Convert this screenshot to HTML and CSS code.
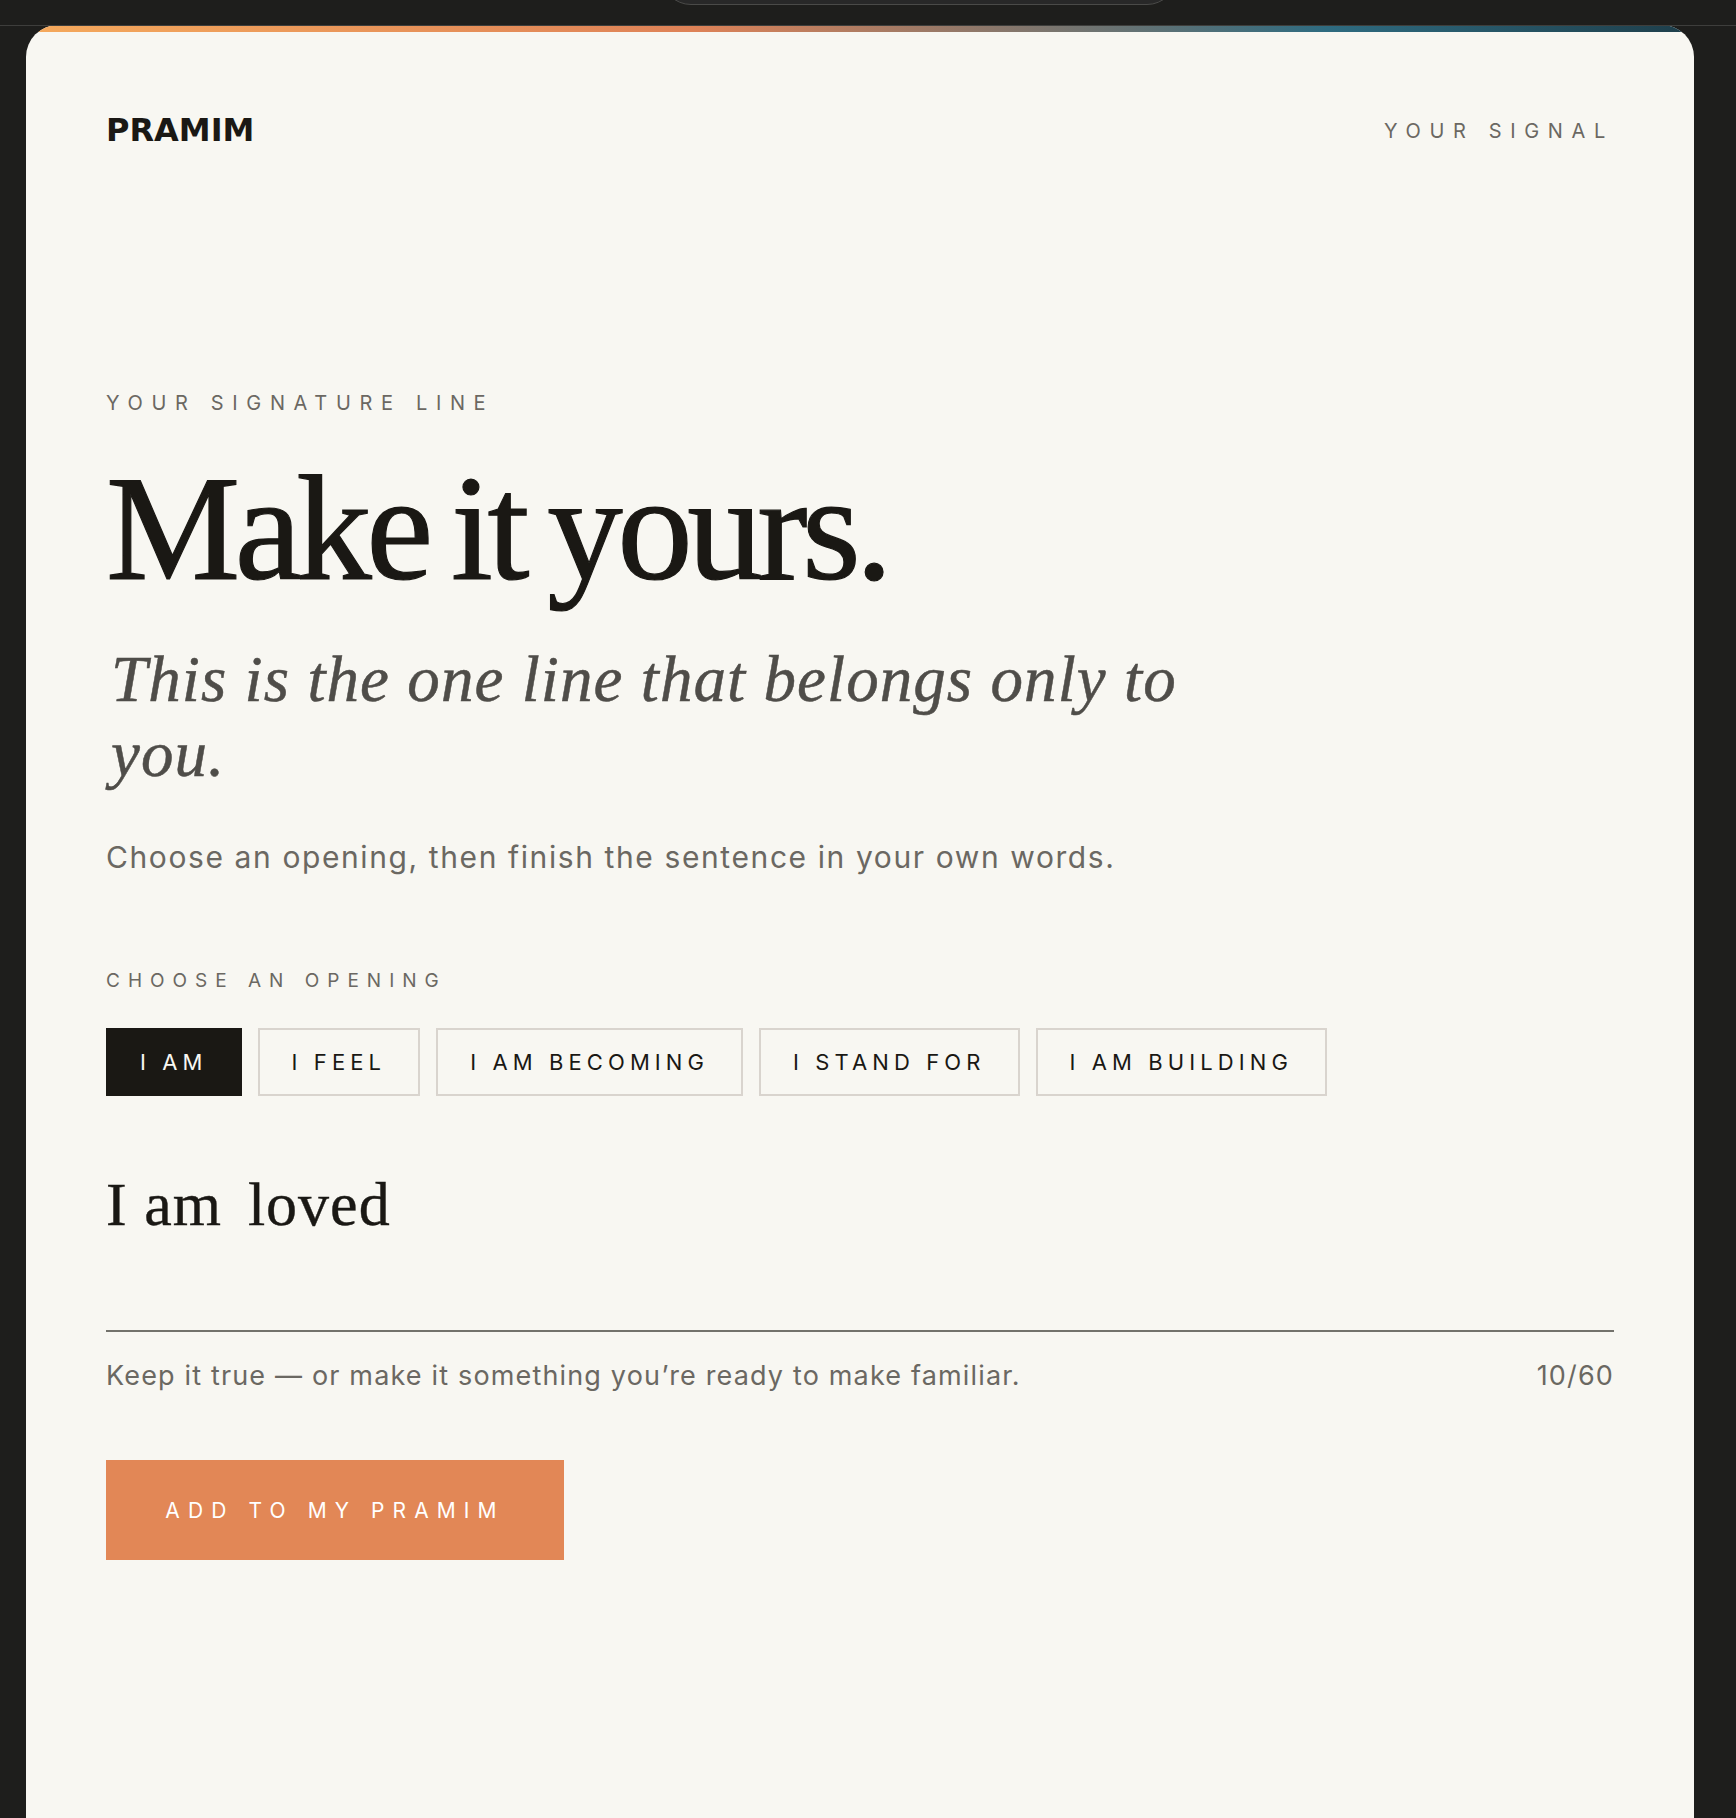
FILE: index.html
```html
<!DOCTYPE html>
<html lang="en">
<head>
    <meta charset="UTF-8">
    <meta name="viewport" content="width=device-width, initial-scale=1.0">
    <title>Pramim - Your Signal</title>
    <link rel="stylesheet" href="styles.css">
</head>
<body>
    <!-- Browser strip at the very top -->
    <div class="top-strip">
        <div class="top-pill"></div>
    </div>

    <div class="card">
        <div class="card-stripe"></div>

        <div class="card-inner">
            <header class="card-header">
                <div class="brand">PRAMIM</div>
                <div class="section-name">YOUR SIGNAL</div>
            </header>

            <div class="eyebrow">YOUR SIGNATURE LINE</div>
            <h1 class="title">Make it yours.</h1>
            <p class="subtitle">This is the one line that belongs only to you.</p>
            <p class="intro">Choose an opening, then finish the sentence in your own words.</p>

            <div class="choose-label">CHOOSE AN OPENING</div>
            <div class="chips">
                <button class="chip chip-active">I AM</button>
                <button class="chip">I FEEL</button>
                <button class="chip">I AM BECOMING</button>
                <button class="chip">I STAND FOR</button>
                <button class="chip">I AM BUILDING</button>
            </div>

            <div class="sentence">
                <span>I am</span>
                <span>loved</span>
            </div>

            <div class="sentence-meta">
                <span>Keep it true — or make it something you’re ready to make familiar.</span>
                <span>10/60</span>
            </div>

            <button class="add-button">ADD TO MY PRAMIM</button>
        </div>
    </div>
</body>
</html>
```

FILE: styles.css
```css
/* Reset CSS */
* {
    margin: 0;
    padding: 0;
    box-sizing: border-box;
}

body {
    height: 1818px;
    overflow: hidden;
    background: #1e1e1c;
    font-family: 'Inter', 'Liberation Sans', sans-serif;
    color: #1a1814;
}

/* Top strip */
.top-strip {
    position: relative;
    height: 26px;
    border-bottom: 1px solid #3e3e3c;
}

.top-pill {
    position: absolute;
    top: -55px;
    left: 661px;
    width: 516px;
    height: 60px;
    background: #282828;
    border: 1px solid #4a4a48;
    border-radius: 30px;
}

/* Card */
.card {
    margin: -1px 42px 0 26px;
    height: 1793px;
    background: #f8f7f2;
    border-radius: 32px 32px 0 0;
    overflow: hidden;
}

.card-stripe {
    height: 7px;
    background: linear-gradient(90deg, #f5a95c 0%, #de8257 40%, #2e6b80 78%, #1e3e4a 100%);
}

.card-inner {
    padding: 78px 80px 0 80px;
}

.card-header {
    display: flex;
    justify-content: space-between;
    align-items: center;
    height: 40px;
}

.brand {
    font-family: 'DejaVu Sans', sans-serif;
    font-size: 32px;
    font-weight: 700;
    letter-spacing: 0;
}

.section-name {
    padding-top: 2px;
    font-size: 20px;
    letter-spacing: 8.65px;
    color: #6b6862;
}

/* Heading block */
.eyebrow {
    margin-top: 241px;
    font-size: 20px;
    letter-spacing: 8.65px;
    color: #6b6862;
}

.title {
    margin-top: 38px;
    font-family: 'Liberation Serif', serif;
    font-size: 151px;
    font-weight: 400;
    line-height: 1;
    letter-spacing: -5.5px;
    word-spacing: -9px;
    -webkit-text-stroke: 1.2px #1a1814;
}

.subtitle {
    margin-top: 38px;
    padding-left: 5px;
    max-width: 1100px;
    font-family: 'Liberation Serif', serif;
    font-size: 65px;
    font-style: italic;
    line-height: 75px;
    letter-spacing: 1.07px;
    color: #4f4d49;
    -webkit-text-stroke: 0.5px #4f4d49;
}

.intro {
    margin-top: 47px;
    font-size: 30px;
    letter-spacing: 1.6px;
    color: #6b6862;
}

/* Opening chips */
.choose-label {
    margin-top: 94px;
    font-size: 19px;
    letter-spacing: 8px;
    color: #6b6862;
}

.chips {
    display: flex;
    gap: 16px;
    margin-top: 36px;
}

.chip {
    height: 68px;
    padding: 0 32px;
    background: transparent;
    border: 2px solid #d9d4ce;
    font-family: 'Inter', 'Liberation Sans', sans-serif;
    font-size: 22px;
    letter-spacing: 5.1px;
    color: #1a1814;
}

.chip-active {
    background: #1a1814;
    border-color: #1a1814;
    color: #f8f7f2;
}

/* Sentence input */
.sentence {
    display: flex;
    gap: 26px;
    height: 236px;
    padding-top: 73px;
    border-bottom: 2px solid #73726c;
    font-family: 'Liberation Serif', serif;
    font-size: 62px;
    line-height: 70px;
    letter-spacing: 1px;
    -webkit-text-stroke: 0.4px #1a1814;
}

.sentence-meta {
    display: flex;
    justify-content: space-between;
    margin-top: 27px;
    font-size: 27px;
    letter-spacing: 1.16px;
    color: #6b6862;
}

.add-button {
    display: block;
    width: 458px;
    height: 100px;
    margin-top: 68px;
    background: #e28756;
    border: none;
    font-family: 'Inter', 'Liberation Sans', sans-serif;
    font-size: 21px;
    letter-spacing: 8.1px;
    color: #fff;
}
```
